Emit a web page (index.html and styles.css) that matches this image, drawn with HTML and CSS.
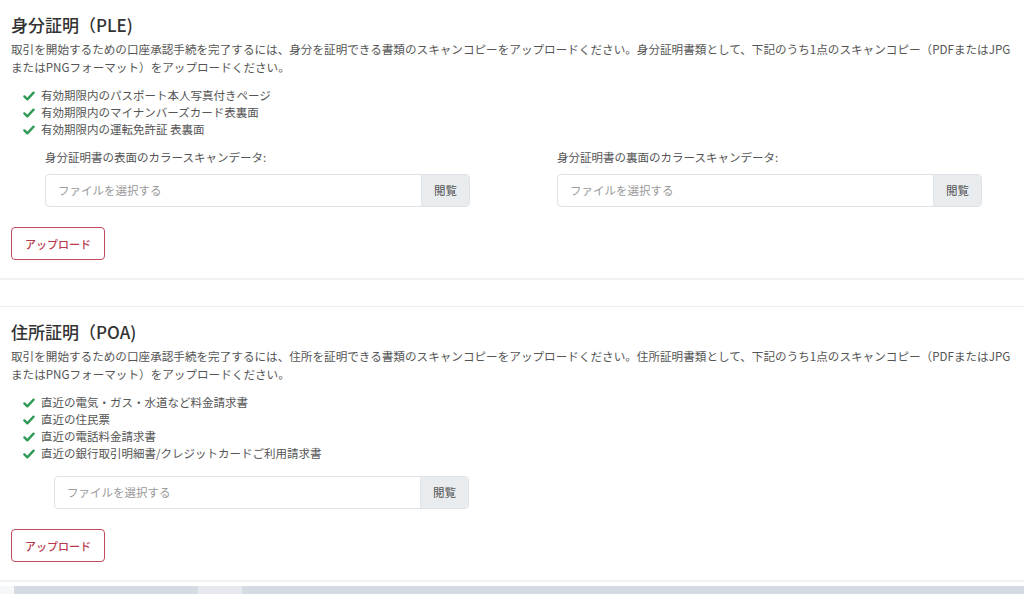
FILE: index.html
```html
<!DOCTYPE html>
<html lang="ja">
<head>
    <meta charset="UTF-8">
    <meta name="viewport" content="width=device-width, initial-scale=1.0">
    <title>本人確認書類のアップロード</title>
    <link rel="stylesheet" href="styles.css">
</head>
<body>
    <div class="doc-card doc-card-first">
        <h2 class="doc-title">身分証明（PLE)</h2>
        <p class="doc-text">取引を開始するための口座承認手続を完了するには、身分を証明できる書類のスキャンコピーをアップロードください。身分証明書類として、下記のうち1点のスキャンコピー（PDFまたはJPGまたはPNGフォーマット）をアップロードください。</p>
        <ul class="check-list">
            <li><svg class="check" viewBox="0 0 14 12"><path d="M1.5 6.5 L5 10 L12.5 2"/></svg>有効期限内のパスポート本人写真付きページ</li>
            <li><svg class="check" viewBox="0 0 14 12"><path d="M1.5 6.5 L5 10 L12.5 2"/></svg>有効期限内のマイナンバーズカード表裏面</li>
            <li><svg class="check" viewBox="0 0 14 12"><path d="M1.5 6.5 L5 10 L12.5 2"/></svg>有効期限内の運転免許証 表裏面</li>
        </ul>
        <div class="file-row">
            <div class="file-group">
                <label class="file-label">身分証明書の表面のカラースキャンデータ:</label>
                <div class="file-input">
                    <span class="file-name">ファイルを選択する</span>
                    <span class="file-browse">閲覧</span>
                </div>
            </div>
            <div class="file-group">
                <label class="file-label">身分証明書の裏面のカラースキャンデータ:</label>
                <div class="file-input">
                    <span class="file-name">ファイルを選択する</span>
                    <span class="file-browse">閲覧</span>
                </div>
            </div>
        </div>
        <button class="upload-btn">アップロード</button>
    </div>

    <div class="doc-card">
        <h2 class="doc-title">住所証明（POA)</h2>
        <p class="doc-text">取引を開始するための口座承認手続を完了するには、住所を証明できる書類のスキャンコピーをアップロードください。住所証明書類として、下記のうち1点のスキャンコピー（PDFまたはJPGまたはPNGフォーマット）をアップロードください。</p>
        <ul class="check-list">
            <li><svg class="check" viewBox="0 0 14 12"><path d="M1.5 6.5 L5 10 L12.5 2"/></svg>直近の電気・ガス・水道など料金請求書</li>
            <li><svg class="check" viewBox="0 0 14 12"><path d="M1.5 6.5 L5 10 L12.5 2"/></svg>直近の住民票</li>
            <li><svg class="check" viewBox="0 0 14 12"><path d="M1.5 6.5 L5 10 L12.5 2"/></svg>直近の電話料金請求書</li>
            <li><svg class="check" viewBox="0 0 14 12"><path d="M1.5 6.5 L5 10 L12.5 2"/></svg>直近の銀行取引明細書/クレジットカードご利用請求書</li>
        </ul>
        <div class="file-input file-input-single">
            <span class="file-name">ファイルを選択する</span>
            <span class="file-browse">閲覧</span>
        </div>
        <button class="upload-btn">アップロード</button>
    </div>

    <div class="next-strip">
        <span class="strip-gap"></span>
        <span class="strip-part strip-a"></span>
        <span class="strip-part strip-b"></span>
        <span class="strip-part strip-c"></span>
    </div>
</body>
</html>
```

FILE: styles.css
```css
body {
    font-family: "Noto Sans CJK JP", "Noto Sans", sans-serif;
    background-color: #fff;
    color: #555;
    margin: 0;
    padding: 0;
    overflow: hidden;
}
.doc-card {
    padding: 14px 11px 18px 11px;
    border-top: 1px solid #ececec;
    border-bottom: 2px solid #f1f1f1;
    margin-bottom: 26px;
}
.doc-card-first {
    margin-top: -1px;
}
.doc-title {
    font-size: 17px;
    font-weight: 500;
    line-height: 22px;
    color: #333;
    margin: 0 0 4px 0;
}
.doc-text {
    font-size: 11.6px;
    line-height: 18px;
    margin: 0 0 11px 0;
    color: #555;
}
.check-list {
    list-style: none;
    margin: 0 0 11px 0;
    padding: 0 0 0 12px;
}
.check-list li {
    font-size: 11.5px;
    line-height: 17px;
    display: flex;
    align-items: center;
}
.check {
    width: 12px;
    height: 10px;
    margin-right: 6px;
    fill: none;
    stroke: #2f9a55;
    stroke-width: 2.8;
    stroke-linecap: round;
    stroke-linejoin: round;
}
.file-row {
    display: grid;
    grid-template-columns: 425px 425px;
    column-gap: 87px;
    padding-left: 34px;
}
.file-label {
    display: block;
    font-size: 11.5px;
    line-height: 17px;
    margin-bottom: 8px;
    color: #555;
}
.file-input {
    display: flex;
    height: 33px;
    border: 1px solid #dfe2e6;
    border-radius: 4px;
    box-sizing: border-box;
    overflow: hidden;
}
.file-input-single {
    width: 415px;
    margin-left: 43px;
    margin-top: 14px;
}
.file-name {
    flex: 1;
    font-size: 11.5px;
    line-height: 31px;
    padding-left: 12px;
    color: #9a9a9a;
}
.file-browse {
    width: 47px;
    background-color: #e9ecef;
    border-left: 1px solid #e2e5e8;
    font-size: 11.5px;
    line-height: 31px;
    text-align: center;
    color: #555;
}
.upload-btn {
    display: block;
    margin-top: 20px;
    width: 94px;
    height: 33px;
    background: #fff;
    border: 1px solid #c24a5c;
    border-radius: 4px;
    color: #b8374b;
    font-family: inherit;
    font-size: 11px;
    font-weight: 500;
    cursor: pointer;
    padding: 0;
}
.next-strip {
    display: flex;
    height: 12px;
    margin-top: -22px;
}
.strip-gap {
    width: 14px;
    background: #f6f7f9;
}
.strip-part {
    display: block;
}
.strip-a {
    width: 184px;
    background: #d5dae3;
}
.strip-b {
    width: 44px;
    background: #e6e9ee;
}
.strip-c {
    flex: 1;
    background: #d5dae3;
}
```
